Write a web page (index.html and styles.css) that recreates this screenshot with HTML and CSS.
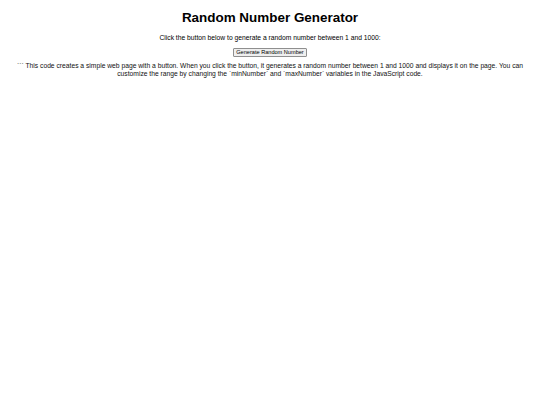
FILE: index.html
```html
<!DOCTYPE html>
<html>
<head>
<meta charset="utf-8">
<title>Random Number Generator</title>
<link rel="stylesheet" href="styles.css">
</head>
<body class="page">
<h1 class="title">Random Number Generator</h1>
<p class="intro">Click the button below to generate a random number between 1 and 1000:</p>
<button class="gen-btn">Generate Random Number</button>
<p class="result"></p>
<p class="note">``` This code creates a simple web page with a button. When you click the button, it generates a random number between 1 and 1000 and displays it on the page. You can customize the range by changing the `minNumber` and `maxNumber` variables in the JavaScript code.</p>
</body>
</html>
```

FILE: styles.css
```css
html, body {
  background: #fff;
}
.page {
  margin: 3.4px;
  font-family: "Liberation Sans", Arial, sans-serif;
  font-size: 6.72px;
  color: #000;
  text-align: center;
}
.title {
  font-size: 13.44px;
  font-weight: bold;
  margin: 6.5px 0 9px;
}
.intro {
  margin: 0 0 6.7px;
}
.gen-btn {
  font-family: "Liberation Sans", Arial, sans-serif;
  font-size: 5.6px;
  line-height: 6.5px;
  padding: 0.4px 2.5px;
  border: 1px solid #8f8f8f;
  border-radius: 1px;
  background: #efefef;
  color: #000;
}
.result {
  margin: 0;
  height: 5.5px;
}
.note {
  margin: 0;
  line-height: 7.6px;
  color: #111;
}
```
